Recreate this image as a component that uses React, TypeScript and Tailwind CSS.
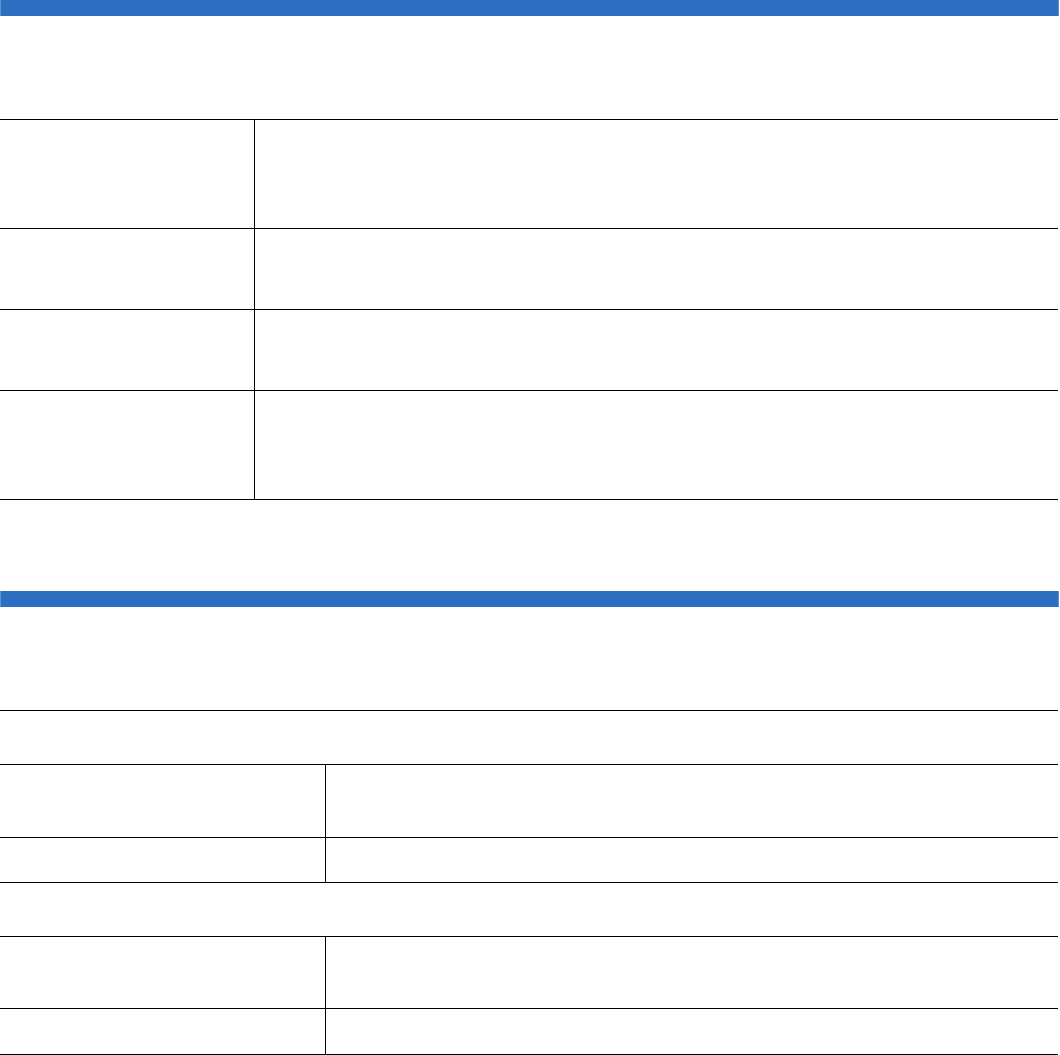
const rows1 = [
  { h: "h-[109px]" },
  { h: "h-[81px]" },
  { h: "h-[81px]" },
  { h: "h-[109px]" },
];

function Bar() {
  return <div className="h-4 w-[1059px] bg-[#2c6fc0] border-l border-r border-[#5f93d4]" />;
}

function Row({ h, left }: { h: string; left: string }) {
  return (
    <div className={`flex box-border border-b border-black ${h}`}>
      <div className={`${left} shrink-0 border-r border-black`} />
      <div className="flex-1" />
    </div>
  );
}

function Full({ h }: { h: string }) {
  return <div className={`box-border border-b border-black ${h}`} />;
}

export default function App() {
  return (
    <div className="w-[1060px] min-h-[1055px] bg-white font-['Liberation_Sans',sans-serif]">
      <Bar />

      <div className="mt-[103px] w-[1058px] border-t border-black">
        {rows1.map((r, i) => (
          <Row key={i} h={r.h} left="w-[255px]" />
        ))}
      </div>

      <div className="mt-[91px]">
        <Bar />
      </div>

      <div className="mt-[103px] w-[1058px] border-t border-black">
        <Full h="h-[54px]" />
        <Row h="h-[73px]" left="w-[326px]" />
        <Row h="h-[45px]" left="w-[326px]" />
        <Full h="h-[54px]" />
        <Row h="h-[72px]" left="w-[326px]" />
        <Row h="h-[46px]" left="w-[326px]" />
      </div>
    </div>
  );
}
